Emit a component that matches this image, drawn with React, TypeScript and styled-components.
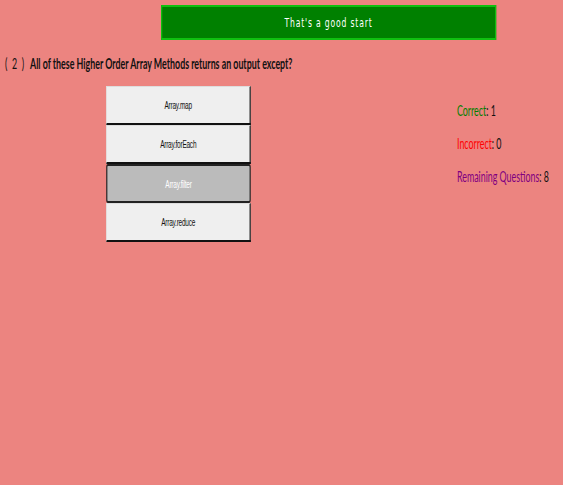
import React from "react";
import styled, { createGlobalStyle } from "styled-components";

const GlobalStyle = createGlobalStyle`
  html, body {
    margin: 0;
    padding: 0;
    background: #ec8480;
    overflow: hidden;
  }
`;

const SCALE = 0.59;

const Stage = styled.div`
  width: ${563 / SCALE}px;
  min-height: 485px;
  transform: scaleX(${SCALE});
  transform-origin: 0 0;
  font-family: Lato, "Open Sans", sans-serif;
  color: #111;
`;

const Banner = styled.div`
  box-sizing: border-box;
  margin: 5px 0 0 ${161 / SCALE}px;
  width: ${335 / SCALE}px;
  height: 35px;
  background: #008000;
  border: 2px solid #10c010;
  color: #ffffff;
  display: flex;
  align-items: center;
  justify-content: center;
  font-family: "DejaVu Sans", sans-serif;
  font-size: 13px;
  letter-spacing: 1.4px;
`;

const Question = styled.div`
  display: flex;
  align-items: center;
  margin-top: 13px;
  padding-left: ${5 / SCALE}px;
  font-size: 15px;
  font-weight: 700;
  height: 20px;
`;

const Number = styled.span`
  width: ${25 / SCALE}px;
  font-weight: 400;
  letter-spacing: 2px;
`;

const Main = styled.div`
  display: flex;
  margin-top: 13px;
`;

const Options = styled.div`
  display: flex;
  flex-direction: column;
  margin-left: ${106 / SCALE}px;
  width: ${145 / SCALE}px;
`;

const Option = styled.button<{ $selected?: boolean }>`
  box-sizing: border-box;
  height: 39px;
  width: 100%;
  margin: 0;
  font-family: "Liberation Sans Narrow", "Liberation Sans", Arial, sans-serif;
  font-size: 11px;
  letter-spacing: -0.4px;
  color: ${(p) => (p.$selected ? "#ffffff" : "#111111")};
  background: ${(p) => (p.$selected ? "#bbbbbb" : "#efefef")};
  border-style: solid;
  border-width: ${(p) => (p.$selected ? "2px" : "1px 2px 2px 1px")};
  border-color: ${(p) =>
    p.$selected ? "#222222" : "#dddddd #111111 #111111 #dddddd"};
  border-radius: ${(p) => (p.$selected ? "3px" : "0")};
  padding: 0;
`;

const Stats = styled.div`
  display: flex;
  flex-direction: column;
  gap: 14px;
  margin-left: ${206 / SCALE}px;
  margin-top: 15px;
  font-size: 15px;
`;

const Stat = styled.div`
  height: 19px;
  line-height: 19px;
`;

const Label = styled.span<{ $color: string }>`
  color: ${(p) => p.$color};
`;

export default function App() {
  return (
    <>
      <GlobalStyle />
      <Stage>
        <Banner>That's a good start</Banner>
        <Question>
          <Number>( 2 )</Number>
          <span>All of these Higher Order Array Methods returns an output except?</span>
        </Question>
        <Main>
          <Options>
            <Option>Array.map</Option>
            <Option>Array.forEach</Option>
            <Option $selected>Array.filter</Option>
            <Option>Array.reduce</Option>
          </Options>
          <Stats>
            <Stat>
              <Label $color="#008000">Correct</Label>: 1
            </Stat>
            <Stat>
              <Label $color="#ff0000">Incorrect</Label>: 0
            </Stat>
            <Stat>
              <Label $color="#800080">Remaining Questions</Label>: 8
            </Stat>
          </Stats>
        </Main>
      </Stage>
    </>
  );
}
